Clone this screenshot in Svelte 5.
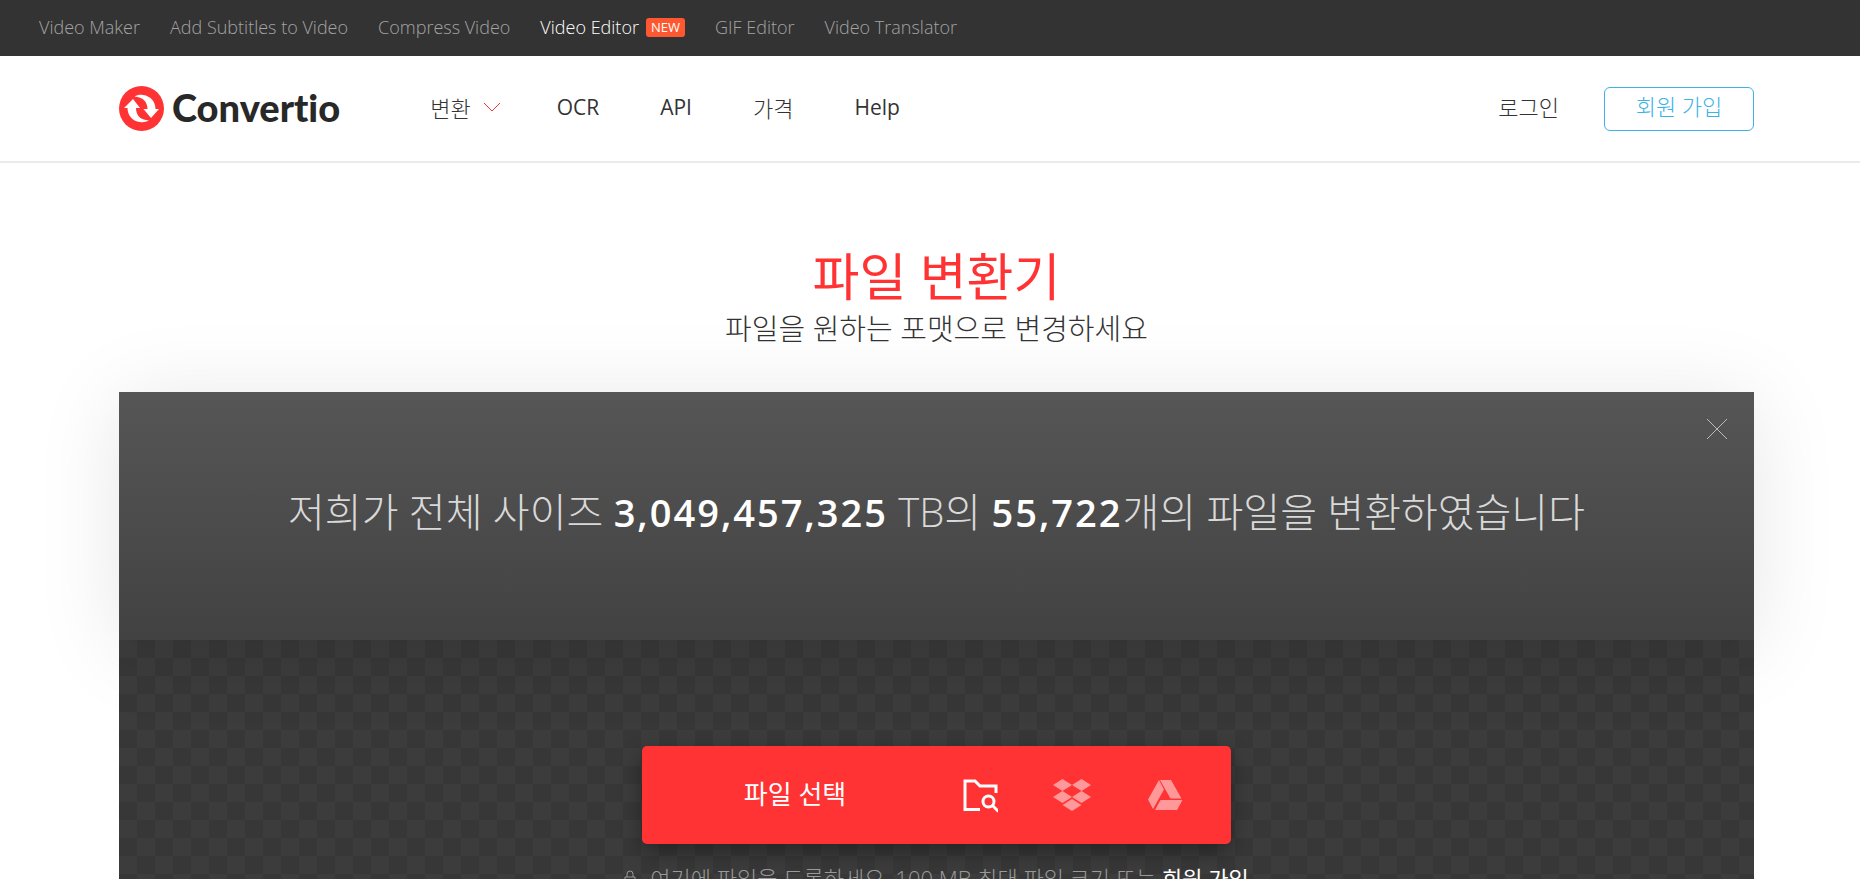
<script>
    let showBanner = true;

    const promoLinks = [
        { label: 'Video Maker', href: '/video-maker' },
        { label: 'Add Subtitles to Video', href: '/add-subtitles' },
        { label: 'Compress Video', href: '/compress-video' },
        { label: 'Video Editor', href: '/video-editor', isNew: true },
        { label: 'GIF Editor', href: '/gif-editor' },
        { label: 'Video Translator', href: '/video-translator' }
    ];

    const menuLinks = [
        { label: 'OCR', href: '/ocr' },
        { label: 'API', href: '/api' },
        { label: '가격', href: '/pricing', korean: true },
        { label: 'Help', href: '/help' }
    ];

    const closeBanner = () => {
        showBanner = false;
    };
</script>

<nav class="promo">
    {#each promoLinks as link}
        <a class:active={link.isNew} href={link.href}>
            {link.label}
            {#if link.isNew}<span class="badge">NEW</span>{/if}
        </a>
    {/each}
</nav>

<header class="header">
    <a class="logo" href="/">
        <svg viewBox="0 0 45 45" width="45" height="45" aria-hidden="true">
            <circle cx="22.5" cy="22.5" r="22.5" fill="#ff3333" />
            <path fill="#fff" d="M14 13 L21 22 H17 C17 29 21 34 30 34.500 C27 36 24 36.500 21 36 C13 35 8.500 29 8.500 22 H5 Z" />
            <path fill="#fff" d="M32 32 L24.500 23 H28.500 C28.500 16 24 11 15.500 10.500 C18 9 21 8.500 24 9 C32 10 36.500 16 36.500 23 H40 Z" />
        </svg>
        <span>Convertio</span>
    </a>

    <nav class="menu">
        <button type="button" class="dropdown korean">
            변환
            <svg viewBox="0 0 18 10" width="18" height="10" aria-hidden="true">
                <path d="M1 1 L9 9 L17 1" fill="none" stroke="#ff3333" />
            </svg>
        </button>
        {#each menuLinks as link}
            <a class:korean={link.korean} href={link.href}>{link.label}</a>
        {/each}
    </nav>

    <div class="account korean">
        <a class="login" href="/login">로그인</a>
        <a class="signup" href="/register">회원 가입</a>
    </div>
</header>

<main>
    <h1>파일 변환기</h1>
    <p class="subtitle">파일을 원하는 포맷으로 변경하세요</p>

    {#if showBanner}
        <section class="banner">
            <p>저희가 전체 사이즈 <b>3,049,457,325</b> TB의 <b>55,722</b>개의 파일을 변환하였습니다</p>
            <button type="button" class="close" aria-label="닫기" on:click={closeBanner}>
                <svg viewBox="0 0 22 22" width="22" height="22" aria-hidden="true">
                    <path d="M1 1 L21 21 M21 1 L1 21" fill="none" stroke="#bbb" />
                </svg>
            </button>
        </section>
    {/if}

    <section class="upload">
        <div class="chooser">
            <button type="button" class="choose">파일 선택</button>
            <button type="button" class="source" aria-label="내 컴퓨터">
                <svg viewBox="-2 -1 38 36" width="38" height="36" aria-hidden="true">
                    <path d="M18 31.500 H3 V3 H13 L18 8 H34 V15" fill="none" stroke="#fff" stroke-width="3" />
                    <circle cx="26.500" cy="23.500" r="5.500" fill="none" stroke="#fff" stroke-width="3" />
                    <path d="M30.500 27.500 L36.500 33.500" fill="none" stroke="#fff" stroke-width="3" />
                </svg>
            </button>
            <button type="button" class="source" aria-label="Dropbox">
                <svg viewBox="0 0 38 34" width="38" height="34" aria-hidden="true">
                    <path fill="#ff9999" d="M9.500 1 L19 7 L9.500 13 L0 7 Z M28.500 1 L38 7 L28.500 13 L19 7 Z M9.500 13 L19 19 L9.500 25 L0 19 Z M28.500 13 L38 19 L28.500 25 L19 19 Z M9.500 27 L19 21 L28.500 27 L19 33 Z" />
                </svg>
            </button>
            <button type="button" class="source" aria-label="Google Drive">
                <svg viewBox="0 0 36 32" width="36" height="32" aria-hidden="true">
                    <path fill="#ff9999" d="M12 1 L17 10.500 L6 30 L1 20.500 Z M13 1 H24 L34.500 19.500 H23.500 Z M13.500 21 H35.500 L30 31 H8 Z" />
                </svg>
            </button>
        </div>
        <p class="hint">
            <svg viewBox="0 0 12 16" width="12" height="16" aria-hidden="true">
                <path d="M3 7 V4 A3 3 0 0 1 9 4 V7 M1 7 H11 V15 H1 Z" fill="none" stroke="#999" />
            </svg>
            <span>여기에 파일을 드롭하세요. 100 MB 최대 파일 크기 또는 <a href="/register">회원 가입</a></span>
        </p>
    </section>
</main>

<style>
    :global(body) {
        margin: 0;
        background: #fff;
        color: #333;
        font-family: "Open Sans", "Noto Sans CJK KR", sans-serif;
    }

    a {
        color: inherit;
        text-decoration: none;
    }

    button {
        padding: 0;
        border: 0;
        background: none;
        color: inherit;
        font: inherit;
        cursor: pointer;
    }

    p,
    h1 {
        margin: 0;
    }

    svg {
        display: block;
        flex: none;
    }

    .promo {
        display: flex;
        align-items: center;
        gap: 30px;
        height: 54px;
        padding: 0 0 2px 39px;
        background: #333;
        color: #a3a3a3;
        font-size: 18px;
        font-weight: 300;
        white-space: nowrap;
    }

    .promo a {
        display: flex;
        align-items: center;
    }

    .promo .active {
        color: #fff;
    }

    .badge {
        margin-left: 7px;
        padding: 0 5px;
        border-radius: 3px;
        background: #ff5830;
        font-size: 13px;
        font-weight: 400;
        line-height: 19px;
    }

    .header {
        display: flex;
        align-items: center;
        height: 105px;
        padding: 0 106px 0 119px;
        border-bottom: 2px solid #ebebeb;
        font-size: 21px;
        white-space: nowrap;
    }

    .header .korean {
        font-size: 22px;
        font-weight: 300;
    }

    .logo {
        display: flex;
        align-items: center;
        gap: 8px;
        color: #282828;
        font-family: Lato, sans-serif;
        font-size: 38px;
        font-variant-ligatures: none;
        font-weight: 900;
        line-height: 44px;
    }

    .logo span {
        padding-bottom: 3px;
    }

    .menu {
        display: flex;
        align-items: center;
        gap: 61px;
        margin-left: 90px;
        padding-bottom: 4px;
    }

    .dropdown {
        display: flex;
        align-items: center;
        gap: 12px;
        margin-right: -5px;
    }

    .account {
        display: flex;
        align-items: center;
        gap: 45px;
        margin-left: auto;
    }

    .login {
        padding-bottom: 6px;
    }

    .signup {
        width: 148px;
        padding-bottom: 6px;
        border: 1px solid #3bb3e7;
        border-radius: 6px;
        color: #3bb3e7;
        line-height: 36px;
        text-align: center;
    }

    main {
        padding: 78px 106px 0 119px;
        text-align: center;
    }

    h1 {
        color: #ff3333;
        font-size: 51px;
        font-weight: 400;
        line-height: 70px;
    }

    .subtitle {
        font-size: 29px;
        font-weight: 300;
        line-height: 36px;
    }

    .banner {
        position: relative;
        margin-top: 45px;
        padding: 90px 0 98px;
        background: linear-gradient(#565656, #424242);
        box-shadow: 0 8px 80px rgba(0, 0, 0, 0.1);
        color: #d9d9d9;
        font-size: 40px;
        font-weight: 300;
        line-height: 60px;
    }

    .banner b {
        color: #fff;
        font-size: 38px;
        font-weight: 600;
        letter-spacing: 2px;
    }

    .close {
        position: absolute;
        top: 26px;
        right: 26px;
    }

    .upload {
        padding: 106px 0 60px;
        background: repeating-conic-gradient(#373737 0 25%, #3c3c3c 0 50%) 0 0 / 36px 36px;
    }

    .chooser {
        display: grid;
        grid-template-columns: 1fr 93px 93px 93px;
        width: 589px;
        height: 98px;
        margin: 0 auto;
        padding-right: 20px;
        box-sizing: border-box;
        border-radius: 5px;
        background: #ff3333;
        box-shadow: 0 8px 20px rgba(0, 0, 0, 0.35);
        color: #fff;
    }

    .choose {
        padding: 0 0 4px 16px;
        font-size: 26px;
    }

    .source {
        display: grid;
        place-items: center;
    }

    .hint {
        display: flex;
        align-items: center;
        justify-content: center;
        gap: 14px;
        margin-top: 20px;
        color: #999;
        font-size: 22px;
        font-weight: 300;
        line-height: 28px;
    }

    .hint a {
        color: #fff;
        font-weight: 400;
    }
</style>
